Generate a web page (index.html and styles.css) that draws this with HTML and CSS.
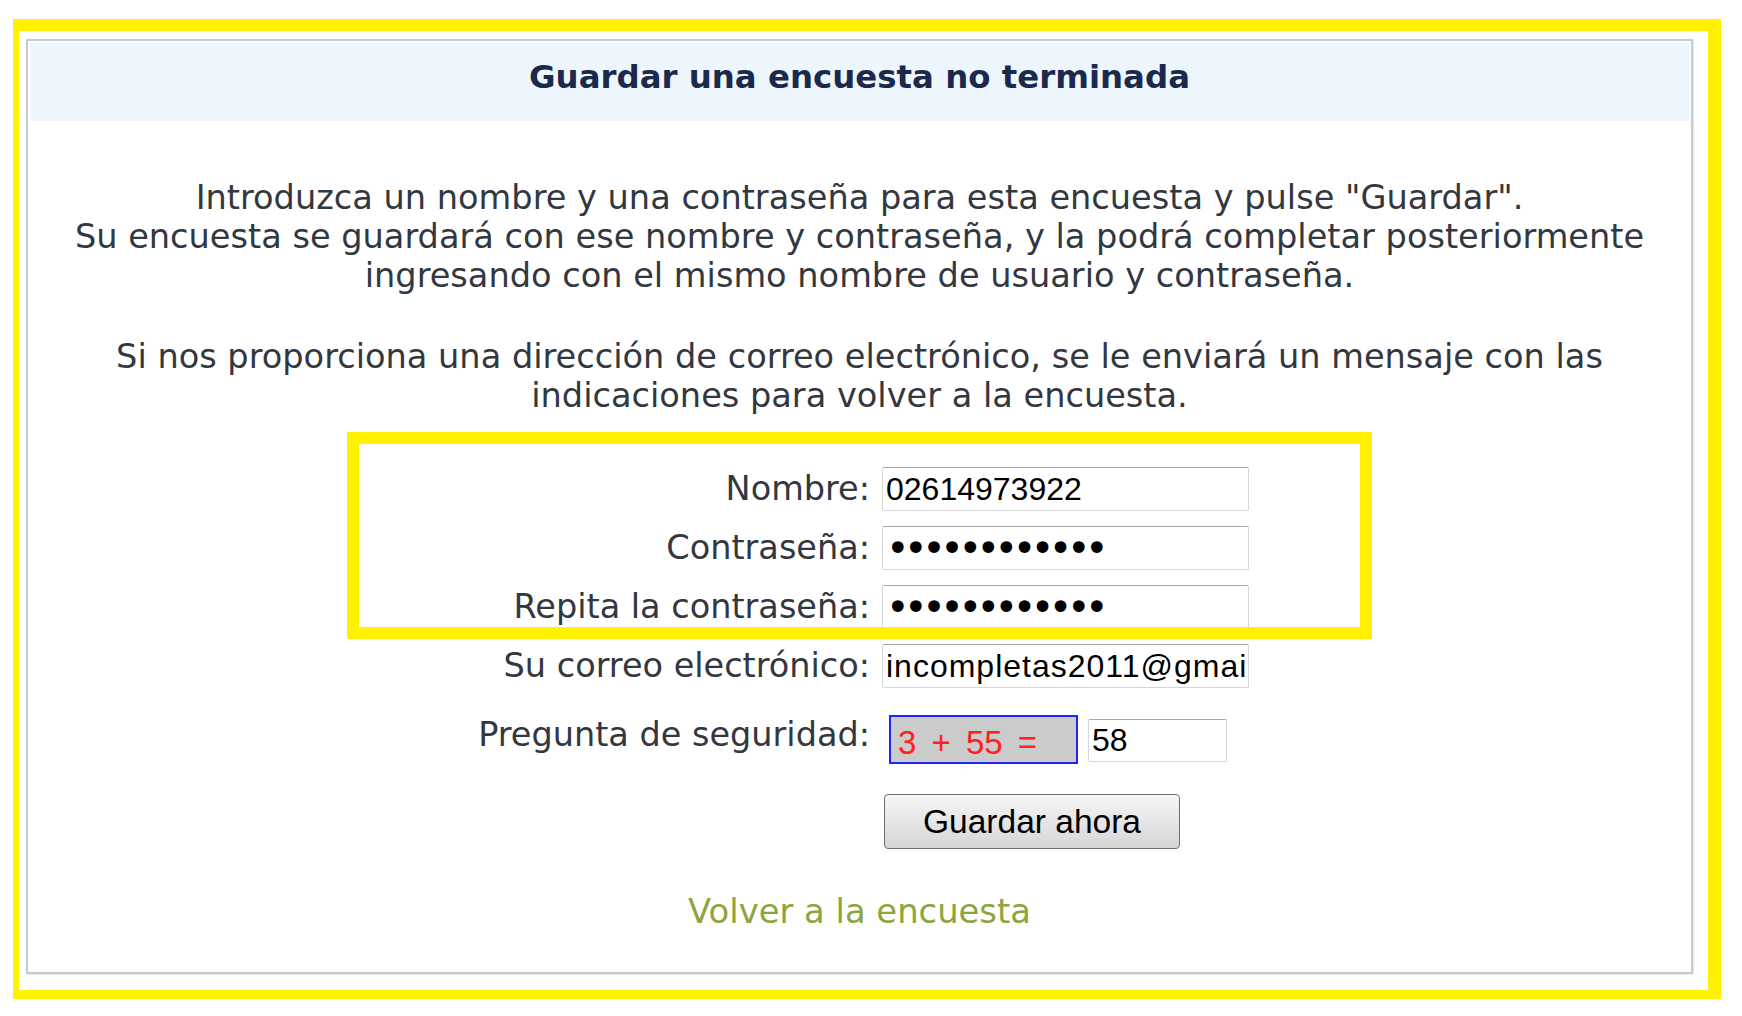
FILE: index.html
```html
<!DOCTYPE html>
<html lang="es">
<head>
<meta charset="utf-8">
<title>Guardar una encuesta no terminada</title>
<link rel="stylesheet" href="styles.css">
</head>
<body>
<div class="frame">
  <div class="panel">
    <div class="panel-header">Guardar una encuesta no terminada</div>
    <div class="panel-body">
      <p class="intro">Introduzca un nombre y una contraseña para esta encuesta y pulse "Guardar".<br>Su encuesta se guardará con ese nombre y contraseña, y la podrá completar posteriormente<br>ingresando con el mismo nombre de usuario y contraseña.</p>
      <p class="intro intro-second">Si nos proporciona una dirección de correo electrónico, se le enviará un mensaje con las<br>indicaciones para volver a la encuesta.</p>
      <form class="save-form" onsubmit="return false">
        <label class="field-label" for="nombre">Nombre:</label>
        <input id="nombre" class="field-input" type="text" value="02614973922">
        <label class="field-label" for="clave">Contraseña:</label>
        <input id="clave" class="field-input field-password" type="password" value="abcdefghijkl">
        <label class="field-label" for="clave2">Repita la contraseña:</label>
        <input id="clave2" class="field-input field-password" type="password" value="abcdefghijkl">
        <label class="field-label" for="correo">Su correo electrónico:</label>
        <input id="correo" class="field-input field-email" type="text" value="incompletas2011@gmail.com">
        <label class="field-label field-label-top" for="captcha">Pregunta de seguridad:</label>
        <div class="captcha-row">
          <span class="captcha">3 + 55 =</span>
          <input id="captcha" class="captcha-input" type="text" value="58">
        </div>
        <div class="actions">
          <button class="save-button" type="button">Guardar ahora</button>
        </div>
      </form>
      <a class="back-link" href="#">Volver a la encuesta</a>
    </div>
  </div>
  <div class="highlight"></div>
</div>
</body>
</html>
```

FILE: styles.css
```css
html, body {
  margin: 0;
  padding: 0;
  background: #ffffff;
}

.frame {
  position: relative;
  box-sizing: border-box;
  width: 1708px;
  height: 980px;
  margin: 19px 0 0 13px;
  border-style: solid;
  border-color: #fff100;
  border-width: 12px 13px 9px 6px;
  padding: 8px 15px 16px 7px;
}

.panel {
  box-sizing: border-box;
  height: 935px;
  border: 2px solid #c5ccd1;
  padding: 2px;
  box-shadow: 1px 1px 0 #e4e8eb;
  font-family: "DejaVu Sans", Verdana, sans-serif;
  color: #333740;
}

.panel-header {
  box-sizing: border-box;
  height: 78px;
  padding-top: 15px;
  background: #edf5fd;
  text-align: center;
  font-weight: bold;
  font-size: 32.4px;
  line-height: 39px;
  color: #1b2a4c;
}

.panel-body {
  padding-top: 57px;
  text-align: center;
}

.intro {
  margin: 0;
  font-size: 33.6px;
  line-height: 39px;
}

.intro-second {
  margin-top: 42px;
}

.save-form {
  display: grid;
  grid-template-columns: 840px auto;
  column-gap: 12px;
  row-gap: 15px;
  margin-top: 52px;
  text-align: left;
}

.field-label {
  font-size: 33.5px;
  line-height: 44px;
  text-align: right;
  white-space: nowrap;
}

.field-label-top {
  line-height: 39px;
  margin-top: 12px;
}

.field-input,
.captcha-input {
  box-sizing: border-box;
  width: 367px;
  height: 44px;
  margin: 0;
  padding: 0 3px;
  border: 1px solid #d6d6d6;
  border-top-color: #a8a8a8;
  border-radius: 2px;
  background: #ffffff;
  font-family: "Liberation Sans", Arial, sans-serif;
  font-size: 32px;
  color: #000000;
  outline: none;
}

.field-email {
  letter-spacing: 1px;
}

.field-password {
  font-family: "DejaVu Sans", sans-serif;
  font-size: 40px;
  letter-spacing: -5.5px;
}

.captcha-row {
  display: flex;
  align-items: flex-start;
  gap: 10px;
  margin: 12px 0 0 7px;
}

.captcha {
  box-sizing: border-box;
  width: 189px;
  height: 49px;
  padding: 6px 0 0 7px;
  border: 2px solid #2222ff;
  background: #cbcbcb;
  font-family: "Liberation Sans", Arial, sans-serif;
  font-size: 33px;
  line-height: 39px;
  word-spacing: 6px;
  color: #ff2020;
  white-space: nowrap;
}

.captcha-input {
  width: 139px;
  height: 43px;
  margin-top: 4px;
}

.actions {
  grid-column: 2;
  margin-top: 15px;
}

.save-button {
  box-sizing: border-box;
  width: 296px;
  height: 55px;
  margin: 0 0 0 2px;
  padding: 0;
  border: 1px solid #6f6f6f;
  border-radius: 4px;
  background: linear-gradient(#f6f6f6, #e6e6e6 50%, #d6d6d6);
  font-family: "Liberation Sans", Arial, sans-serif;
  font-size: 33.5px;
  color: #000000;
}

.back-link {
  display: block;
  margin-top: 43px;
  font-size: 33.8px;
  line-height: 39px;
  color: #8ea53d;
  text-decoration: none;
}

.highlight {
  position: absolute;
  left: 328px;
  top: 401px;
  box-sizing: border-box;
  width: 1025px;
  height: 207px;
  border: 12px solid #fff100;
  pointer-events: none;
}
```
